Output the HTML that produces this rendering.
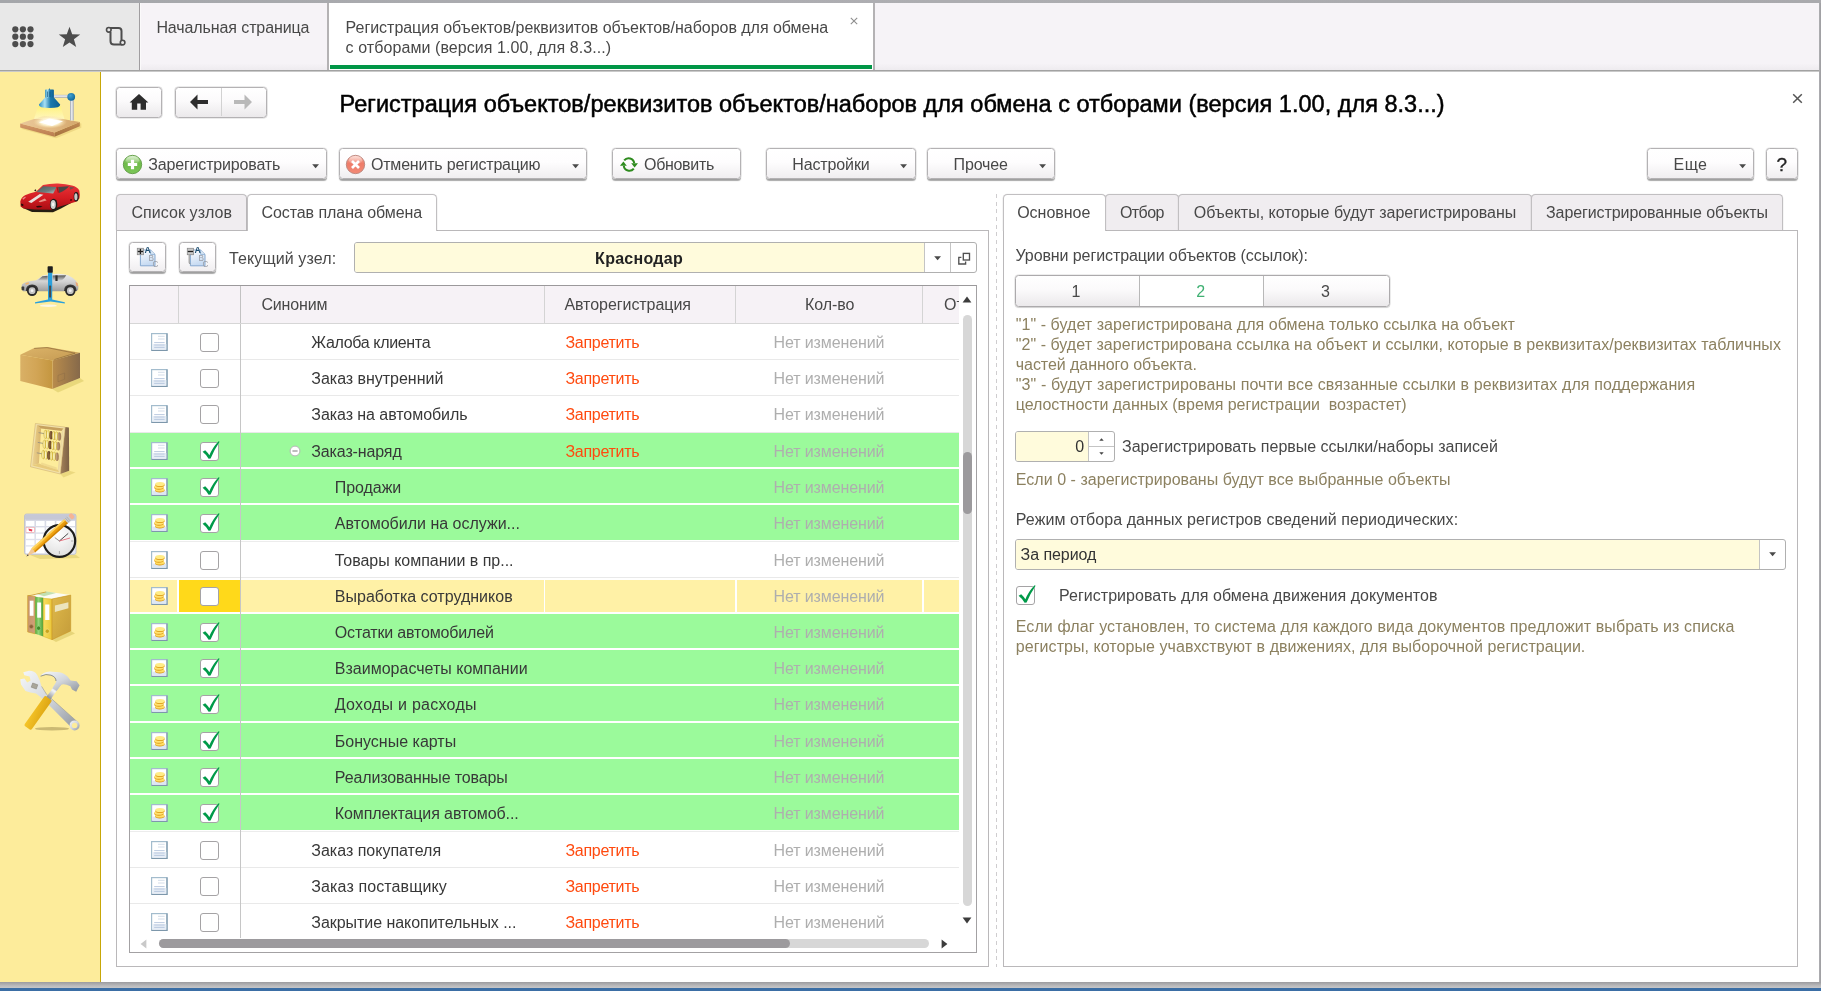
<!DOCTYPE html>
<html lang="ru"><head><meta charset="utf-8"><title>Регистрация объектов для обмена</title>
<style>
html,body{margin:0;padding:0;background:#fff;}
body{width:1821px;height:991px;overflow:hidden;font-family:"Liberation Sans",Arial,sans-serif;}
#app{will-change:transform;position:relative;width:1821px;height:991px;overflow:hidden;}
#app div,#app span.t,#app svg{position:absolute;box-sizing:border-box;}
span.t{white-space:pre;}
.btn{border:1px solid #b4b2b4;border-radius:3.5px;background:linear-gradient(#ffffff 0%,#fefdfe 45%,#f0eef0 100%);box-shadow:0 1.2px 1px rgba(0,0,0,.34),0 0 0 .5px rgba(0,0,0,.10);}
.btn.nav{box-shadow:0 0 0 .6px rgba(0,0,0,.16);background:linear-gradient(#ffffff 0%,#fbfafb 45%,#ebe9eb 100%);}
.tab{border:1px solid #c1bfc1;border-bottom:none;border-radius:4.5px 4.5px 0 0;background:#f0edf0;box-shadow:0 0 0 .5px rgba(0,0,0,.09);clip-path:inset(-1px -1px 0 -1px);}
.tab.on{background:#fff;}
.cb{border:1.5px solid #a5a3a5;border-radius:3px;background:#fff;}

</style></head>
<body>
<div id="app">
<div style="left:0px;top:0px;width:1821px;height:3px;background:linear-gradient(90deg,#a4a6aa,#aeaeb2 40%,#a9a9ad);"></div>
<div style="left:0px;top:3px;width:1821px;height:67px;background:linear-gradient(#f6f3f7 0,#f6f3f7 90%,#eeebef 100%);"></div>
<div style="left:0px;top:3px;width:139px;height:67px;background:#e8e8e8;"></div>
<div style="left:138.8px;top:3px;width:1.5px;height:67px;background:#a09ea0;"></div>
<div style="left:140px;top:3px;width:1px;height:67px;background:#fbfafb;"></div>
<div style="left:327.4px;top:3px;width:1.7px;height:67px;background:#b4b2b4;"></div>
<div style="left:329px;top:3px;width:544px;height:67px;background:#fff;"></div>
<div style="left:873.4px;top:3px;width:1.7px;height:67px;background:#b4b2b4;"></div>
<div style="left:330.2px;top:65.4px;width:541.6px;height:3.8px;background:#009646;"></div>
<div style="left:0px;top:70px;width:1821px;height:1px;background:#a2a2a2;"></div>
<div style="left:0px;top:71px;width:1821px;height:1px;background:#c9c9c9;"></div>
<span class="t" style="left:156.40px;top:18.46px;font-size:16px;line-height:20px;color:#484848;letter-spacing:-0.101px;">Начальная страница</span>
<span class="t" style="left:345.60px;top:18.46px;font-size:16px;line-height:20px;color:#484848;letter-spacing:-0.031px;">Регистрация объектов/реквизитов объектов/наборов для обмена</span>
<span class="t" style="left:345.60px;top:38.46px;font-size:16px;line-height:20px;color:#484848;letter-spacing:0.076px;">с отборами (версия 1.00, для 8.3...)</span>
<svg style="left:849px;top:16.3px" width="10" height="10" viewBox="0 0 10 10"><path d="M1.8 1.8L8.2 8.2M8.2 1.8L1.8 8.2" stroke="#8e8e8e" stroke-width="1.1" fill="none"/></svg>
<svg style="left:12px;top:26px" width="22" height="22" viewBox="0 0 22 22" fill="#4d4d4d"><rect x="0.2" y="0.2" width="6.2" height="6.2" rx="3.1"/><rect x="7.8" y="0.2" width="6.2" height="6.2" rx="3.1"/><rect x="15.4" y="0.2" width="6.2" height="6.2" rx="3.1"/><rect x="0.2" y="7.6" width="6.2" height="6.2" rx="3.1"/><rect x="7.8" y="7.6" width="6.2" height="6.2" rx="3.1"/><rect x="15.4" y="7.6" width="6.2" height="6.2" rx="3.1"/><rect x="0.2" y="15.0" width="6.2" height="6.2" rx="3.1"/><rect x="7.8" y="15.0" width="6.2" height="6.2" rx="3.1"/><rect x="15.4" y="15.0" width="6.2" height="6.2" rx="3.1"/></svg>
<svg style="left:58px;top:26px" width="23" height="22" viewBox="0 0 23 22"><path d="M11.5 0.8L14.2 8.3L22.2 8.5L15.9 13.3L18.2 21L11.5 16.5L4.8 21L7.1 13.3L0.8 8.5L8.8 8.3Z" fill="#4d4d4d"/></svg>
<svg style="left:105px;top:26px" width="22" height="21" viewBox="0 0 22 21" fill="none" stroke="#4d4d4d" stroke-width="2"><path d="M4.5 2H13.5Q16.5 2 16.5 5V14"/><path d="M5.5 6V15Q5.5 18.5 9 18.5H17"/><circle cx="3.8" cy="3.8" r="2.3" fill="#e8e8e8" stroke-width="1.6"/><circle cx="17.6" cy="16.6" r="2.3" fill="#e8e8e8" stroke-width="1.6"/></svg>
<div style="left:1819px;top:3px;width:2px;height:988px;background:linear-gradient(90deg,#b0b0b3,#9c9ca0);"></div>
<div style="left:0px;top:982px;width:1821px;height:6px;background:linear-gradient(#9b9b9f,#b9b9bb 60%,#c6c6c8);"></div>
<div style="left:0px;top:988px;width:1821px;height:3px;background:#3b6ea5;"></div>
<div style="left:0px;top:72px;width:100px;height:910px;background:#fdec9b;"></div>
<div style="left:100px;top:72px;width:1px;height:910px;background:#c7a708;"></div>
<svg style="left:0;top:72px" width="100" height="910" viewBox="0 72 100 910">
<defs>
<linearGradient id="wd1" x1="0" y1="0" x2="1" y2="0"><stop offset="0" stop-color="#e9c79a"/><stop offset="0.5" stop-color="#e3bb85"/><stop offset="1" stop-color="#d2a56a"/></linearGradient>
<linearGradient id="wd2" x1="0" y1="0" x2="0" y2="1"><stop offset="0" stop-color="#d59a6a"/><stop offset="1" stop-color="#b87c4e"/></linearGradient>
<linearGradient id="wd3" x1="0" y1="0" x2="0" y2="1"><stop offset="0" stop-color="#c08a52"/><stop offset="1" stop-color="#a5723f"/></linearGradient>
<linearGradient id="lsh" x1="0" y1="0" x2="1" y2="0"><stop offset="0" stop-color="#2a8cc0"/><stop offset="0.28" stop-color="#a8e0f4"/><stop offset="0.55" stop-color="#1a78ac"/><stop offset="1" stop-color="#0d5f92"/></linearGradient>
<linearGradient id="lcone" x1="0" y1="0" x2="0" y2="1"><stop offset="0" stop-color="#fff27a" stop-opacity="0.95"/><stop offset="1" stop-color="#fff9c4" stop-opacity="0.75"/></linearGradient>
<radialGradient id="lglow" cx="0.5" cy="0.5" r="0.5"><stop offset="0" stop-color="#fff"/><stop offset="0.55" stop-color="#fff8d8" stop-opacity="0.9"/><stop offset="1" stop-color="#f6dca0" stop-opacity="0"/></radialGradient>
<linearGradient id="pole" x1="0" y1="0" x2="1" y2="0"><stop offset="0" stop-color="#9aa0aa"/><stop offset="0.45" stop-color="#eef0f4"/><stop offset="1" stop-color="#a4a8b2"/></linearGradient>
<linearGradient id="poleh" x1="0" y1="0" x2="0" y2="1"><stop offset="0" stop-color="#b4b8c2"/><stop offset="0.45" stop-color="#f0f2f6"/><stop offset="1" stop-color="#9ca2ac"/></linearGradient>
<radialGradient id="ball" cx="0.4" cy="0.35" r="0.7"><stop offset="0" stop-color="#3fa0d0"/><stop offset="1" stop-color="#0d6498"/></radialGradient>

<linearGradient id="carR" x1="0" y1="0" x2="0" y2="1"><stop offset="0" stop-color="#e8363a"/><stop offset="0.55" stop-color="#d41c22"/><stop offset="1" stop-color="#a80e14"/></linearGradient>
<linearGradient id="glass" x1="0" y1="0" x2="1" y2="1"><stop offset="0" stop-color="#4a5a5c"/><stop offset="0.6" stop-color="#6b7c7c"/><stop offset="1" stop-color="#b8c4c4"/></linearGradient>
<radialGradient id="whl" cx="0.5" cy="0.5" r="0.5"><stop offset="0" stop-color="#f4f4f4"/><stop offset="0.6" stop-color="#c4c4c4"/><stop offset="0.72" stop-color="#3a3a3a"/><stop offset="1" stop-color="#1c1c1c"/></radialGradient>

<linearGradient id="silv" x1="0" y1="0" x2="0" y2="1"><stop offset="0" stop-color="#ececec"/><stop offset="0.45" stop-color="#d2d2d2"/><stop offset="1" stop-color="#9c9c9c"/></linearGradient>
<linearGradient id="swin" x1="0" y1="0" x2="0" y2="1"><stop offset="0" stop-color="#5a5a5a"/><stop offset="1" stop-color="#d8d8d8"/></linearGradient>

<linearGradient id="bxL" x1="0" y1="0" x2="1" y2="0"><stop offset="0" stop-color="#d9b066"/><stop offset="0.5" stop-color="#d2a556"/><stop offset="1" stop-color="#c4963f"/></linearGradient>
<linearGradient id="bxR" x1="0" y1="0" x2="1" y2="0"><stop offset="0" stop-color="#b98c4c"/><stop offset="1" stop-color="#86694a"/></linearGradient>
<linearGradient id="bxT" x1="0" y1="0" x2="1" y2="1"><stop offset="0" stop-color="#dcb469"/><stop offset="1" stop-color="#c59a52"/></linearGradient>

<linearGradient id="abF" x1="0" y1="0" x2="1" y2="0"><stop offset="0" stop-color="#ecd392"/><stop offset="1" stop-color="#d9b56c"/></linearGradient>
<linearGradient id="abS" x1="0" y1="0" x2="1" y2="0"><stop offset="0" stop-color="#a5835a"/><stop offset="1" stop-color="#7c6045"/></linearGradient>

<linearGradient id="cal" x1="0" y1="0" x2="0" y2="1"><stop offset="0" stop-color="#d4d6e2"/><stop offset="1" stop-color="#e6e8f2"/></linearGradient>
<radialGradient id="clk" cx="0.45" cy="0.3" r="0.8"><stop offset="0" stop-color="#ffffff"/><stop offset="1" stop-color="#dcdcdc"/></radialGradient>
<linearGradient id="pen" x1="0" y1="0" x2="1" y2="1"><stop offset="0" stop-color="#ffd25a"/><stop offset="0.5" stop-color="#f2a512"/><stop offset="1" stop-color="#d98c06"/></linearGradient>

<linearGradient id="fBr" x1="0" y1="0" x2="1" y2="0"><stop offset="0" stop-color="#c9966a"/><stop offset="1" stop-color="#cfa07a"/></linearGradient>
<linearGradient id="fGr" x1="0" y1="0" x2="1" y2="0"><stop offset="0" stop-color="#58a83a"/><stop offset="0.4" stop-color="#92d478"/><stop offset="1" stop-color="#4e9e32"/></linearGradient>
<linearGradient id="fYe" x1="0" y1="0" x2="1" y2="0"><stop offset="0" stop-color="#f8de5e"/><stop offset="1" stop-color="#eac63a"/></linearGradient>
<linearGradient id="fSd" x1="0" y1="0" x2="1" y2="1"><stop offset="0" stop-color="#dfb94a"/><stop offset="1" stop-color="#c49c3a"/></linearGradient>

<linearGradient id="met" x1="0" y1="0" x2="1" y2="1"><stop offset="0" stop-color="#f6f8fa"/><stop offset="0.5" stop-color="#d2d6dc"/><stop offset="1" stop-color="#8e949c"/></linearGradient>
<linearGradient id="met2" x1="0" y1="0" x2="1" y2="0"><stop offset="0" stop-color="#8a8e94"/><stop offset="0.4" stop-color="#f2f4f6"/><stop offset="1" stop-color="#7c8086"/></linearGradient>
<linearGradient id="hnd" x1="0" y1="0" x2="1" y2="1"><stop offset="0" stop-color="#f6c62a"/><stop offset="1" stop-color="#dca412"/></linearGradient>
</defs>

<!-- 1: desk lamp -->
<g>
<path d="M20.2 123.6L44.1 115.7L79.8 122L79.8 126.3L54.6 136.8L20.2 127.6Z" fill="#c9a040" opacity="0.25" transform="translate(1.5,1.5)"/>
<path d="M20.2 123.6L54.6 132.5L54.6 136.8L20.2 127.6Z" fill="url(#wd2)"/>
<path d="M54.6 132.5L79.8 122L79.8 126.3L54.6 136.8Z" fill="url(#wd3)"/>
<path d="M20.2 123.6L44.1 115.7L79.8 122L54.6 132.5Z" fill="url(#wd1)"/>
<path d="M38.2 106L60.5 106L64.5 119L34 119Z" fill="url(#lcone)"/>
<ellipse cx="50" cy="122" rx="17" ry="6.5" fill="url(#lglow)"/>
<path d="M38.9 122.3L49.3 118.4L63.1 121.3L52 125.9Z" fill="#fff"/>
<rect x="70" y="99" width="3.8" height="21.5" fill="url(#pole)"/>
<rect x="53" y="94.8" width="16" height="3" fill="url(#poleh)"/>
<circle cx="71.2" cy="96.8" r="3.9" fill="url(#ball)"/>
<path d="M49.4 88L50.2 90H48.6Z" fill="#1a6a9c"/>
<rect x="45.1" y="89.6" width="8.8" height="8.6" rx="0.8" fill="url(#lsh)"/>
<path d="M47.6 91.5V97M49.9 91.5V97" stroke="#0b4a74" stroke-width="1" opacity="0.7"/>
<path d="M45.1 97.4Q42.4 100.6 38.9 104.4Q38.4 107.9 49.6 107.9Q60.6 107.9 60.2 104.4Q56.8 100.6 53.9 97.4Z" fill="url(#lsh)"/>
</g>

<!-- 2: red car -->
<g>
<path d="M22 207.6L32 212L53 212.2L61 208.4L72 202.6L52 205Z" fill="#120c06" opacity="0.92"/>
<path d="M20.6 206.5L20.3 201.5Q21 197.5 25 195.2Q30 193 36 191.8L43 185Q50 183.2 58 183.4Q66 183.8 72 185.6Q77.5 187 79.3 190.4Q80.2 194.5 79.4 198.6L76 201.8L60 206.4L51.5 209.8L35 209.6L23.5 208.4Z" fill="url(#carR)"/>
<path d="M36.4 192L43.2 186.3L56.6 186.9L53.2 193.4Z" fill="url(#glass)"/>
<path d="M58.2 187L69 186.3Q66.4 190 59 193Z" fill="#4a4646"/>
<path d="M69.6 186.8L74.5 187.6Q72.5 189.2 70 189.8Z" fill="#7a4a4a"/>
<path d="M57 186.8L58.4 192.6" stroke="#a31217" stroke-width="1.2"/>
<path d="M39.8 193.9L43.4 194.7L31.4 202.9L28.2 201.7Z" fill="#e9e1dd"/>
<path d="M38.6 201.2L44.8 198.6L46.6 200.6L40 202.2Z" fill="#f0b0a0" opacity="0.8"/>
<path d="M22.4 198.6L25.2 196.4L25.8 197.6L23.2 199.8Z" fill="#f0b8b0" opacity="0.7"/>
<path d="M36 206.2Q39 205.4 42.5 206.2Q41 207.6 37 207.4Z" fill="#2a0a0a"/>
<path d="M21 203.4L23.4 204.2L23.2 206.2L21.2 205.4Z" fill="#2a0a0a"/>
<ellipse cx="53.6" cy="204.4" rx="3.7" ry="5.7" fill="#1e1a1a"/>
<ellipse cx="53.2" cy="204.4" rx="2.6" ry="4.5" fill="#cfcfcf"/>
<ellipse cx="53.1" cy="204.4" rx="1.1" ry="1.9" fill="#f6f6f6"/>
<ellipse cx="76.2" cy="196.7" rx="2.5" ry="4.7" fill="#1e1a1a"/>
<ellipse cx="75.9" cy="196.7" rx="1.6" ry="3.5" fill="#c9c9c9"/>
<path d="M34.2 190.2L35.6 189.2L36.4 190.4L35.2 191.6Z" fill="#2a1a1a"/>
<path d="M70 199.6L72 199.2L72 200.4L70.2 200.8Z" fill="#3a0a0a"/>
</g>

<!-- 3: car on lift -->
<g>
<ellipse cx="48.4" cy="305.7" rx="8.5" ry="1.3" fill="#fbf7e6"/>
<path d="M48 272.6H52.2V299.5L64.8 302.2V303.6L50.6 301.6L35 303.6V302.2L48 299.5Z" fill="#2aa0dc"/>
<path d="M21.6 288.4L21.9 284.4Q24 282.2 28 281.4L36.2 280.2L42.6 275.4Q50 273.8 58 273.8Q64 274 68.2 275.2Q73 277.6 75.6 280.4Q78.2 282.4 78.4 286L78.2 289.6L76.6 291.2H23Z" fill="url(#silv)"/>
<path d="M37.4 280.4L42.4 276.2L47.6 275.8V281Z" fill="url(#swin)"/>
<path d="M52.6 275.5L66.2 275.3Q64.6 278.6 61.4 280.8L52.6 281Z" fill="url(#swin)"/>
<rect x="55.4" y="275.4" width="2.2" height="5.6" fill="#2c2c2c"/>
<path d="M25.4 283L29 282.2L28.6 284L25.8 284.8Z" fill="#f4b46a"/>
<path d="M75.4 281.6L77.6 283.4L78 286.4L76.4 285.6Z" fill="#f2a66a"/>
<rect x="21.6" y="286.6" width="2.6" height="3.6" rx="0.6" fill="#3c3c3c"/>
<rect x="48" y="272.6" width="4.2" height="19" fill="#2aa0dc"/>
<rect x="47.6" y="266.2" width="5.2" height="6.6" rx="0.8" fill="#1e1e1e"/>
<rect x="49.1" y="285.6" width="2" height="12" rx="0.6" fill="#4a4a4a"/>
<path d="M25.8 291Q25.8 284.4 32.1 284.4Q38.4 284.4 38.4 291Z" fill="#3a3a3a"/><circle cx="32.1" cy="290.7" r="5.2" fill="#2a2a2a"/><circle cx="32.1" cy="290.7" r="3.4" fill="#c4c4c4"/><circle cx="32.1" cy="290.7" r="1.4" fill="#f2f2f2"/>
<path d="M64 291Q64 284.4 70.3 284.4Q76.6 284.4 76.6 291Z" fill="#3a3a3a"/><circle cx="70.3" cy="290.7" r="5.2" fill="#2a2a2a"/><circle cx="70.3" cy="290.7" r="3.4" fill="#c4c4c4"/><circle cx="70.3" cy="290.7" r="1.4" fill="#f2f2f2"/>
</g>

<!-- 4: box -->
<g>
<path d="M52.4 388.9L80 378L84 381L58 392.5Z" fill="#d9c860" opacity="0.55"/>
<path d="M20.3 354.7L34.2 348L47.6 347.1L80 352.8L52.4 360.4Z" fill="url(#bxT)"/>
<path d="M20.3 354.7L52.4 360.4V388.9L20.3 381Z" fill="url(#bxL)"/>
<path d="M52.4 360.4L80 352.8V378L52.4 388.9Z" fill="url(#bxR)"/>
<path d="M34.2 348.4L47 347.6L75 353.2L54.4 359.6" fill="none" stroke="#8c6a3a" stroke-width="0.9" opacity="0.75"/>
<path d="M52.4 360.4V388.9" stroke="#d9b46a" stroke-width="0.7" opacity="0.8"/>
<path d="M58 375.4L64.6 373V379.2L58 381.8Z" fill="none" stroke="#8a6a46" stroke-width="0.6" opacity="0.7"/>
</g>

<!-- 5: abacus -->
<g>
<path d="M60.3 474L69.2 470.7L75.5 472.4L63.5 477.6Z" fill="#dcc868" opacity="0.55"/>
<path d="M65.2 427.1L68.9 427.5L69.2 470.7L60.3 474Z" fill="url(#abS)"/>
<path d="M35.4 423.5L65.2 427.1L60.3 474L30.5 466.8Z" fill="#f1e0ac" stroke="#c9a868" stroke-width="0.5"/>
<path d="M36.9 425.2L63.6 428.4L59.2 472.2L32.2 465.6Z" fill="#fdec9b"/>
<path d="M36.9 425.2L41.1 428.5L38.9 463.4L32.2 465.6Z" fill="url(#abF)"/>
<path d="M36.9 425.2L63.6 428.4L61.6 431L41.1 428.5Z" fill="#c6a05e"/>
<path d="M63.6 428.4L59.2 472.2L57.7 469.8L61.6 431Z" fill="#ecd9a2"/>
<path d="M38.9 463.4L57.7 469.8L59.2 472.2L32.2 465.6Z" fill="#e7ca7c"/>
<path d="M40.5 464.4L56.6 469.8L56.9 467.6L41.6 462.6Z" fill="#efd98e" opacity="0.9"/>
<g stroke="#8f8b80" stroke-width="0.8"><path d="M38.6 432.6L45 433.8"/><path d="M37.8 442.4L44 443.6"/><path d="M36.8 452.8L43 454"/></g>
<ellipse cx="45.6" cy="434.4" rx="1.75" ry="4.3" fill="#e4c94a" stroke="#b4962e" stroke-width="0.35"/><ellipse cx="45.1" cy="434.4" rx="0.7" ry="3.9" fill="#f8f1c4" opacity="0.9"/><ellipse cx="48.4" cy="434.8" rx="1.75" ry="4.3" fill="#ecd662" stroke="#b4962e" stroke-width="0.35"/><ellipse cx="47.8" cy="434.8" rx="0.7" ry="3.9" fill="#fbf6d2" opacity="0.9"/><ellipse cx="51.1" cy="435.2" rx="1.75" ry="4.3" fill="#6f4a2c"/><ellipse cx="50.6" cy="435.2" rx="0.7" ry="3.9" fill="#8a6240" opacity="0.9"/><ellipse cx="53.9" cy="435.7" rx="1.75" ry="4.3" fill="#e4c94a" stroke="#b4962e" stroke-width="0.35"/><ellipse cx="53.3" cy="435.7" rx="0.7" ry="3.9" fill="#f8f1c4" opacity="0.9"/><ellipse cx="56.6" cy="436.1" rx="1.75" ry="4.3" fill="#ecd662" stroke="#b4962e" stroke-width="0.35"/><ellipse cx="56.1" cy="436.1" rx="0.7" ry="3.9" fill="#fbf6d2" opacity="0.9"/><ellipse cx="59.4" cy="436.5" rx="1.75" ry="4.3" fill="#a5805a"/><ellipse cx="58.8" cy="436.5" rx="0.7" ry="3.9" fill="#c4a078" opacity="0.9"/><ellipse cx="44.6" cy="444.2" rx="1.75" ry="4.3" fill="#e4c94a" stroke="#b4962e" stroke-width="0.35"/><ellipse cx="44.1" cy="444.2" rx="0.7" ry="3.9" fill="#f8f1c4" opacity="0.9"/><ellipse cx="47.4" cy="444.6" rx="1.75" ry="4.3" fill="#ecd662" stroke="#b4962e" stroke-width="0.35"/><ellipse cx="46.8" cy="444.6" rx="0.7" ry="3.9" fill="#fbf6d2" opacity="0.9"/><ellipse cx="50.1" cy="445.0" rx="1.75" ry="4.3" fill="#6f4a2c"/><ellipse cx="49.6" cy="445.0" rx="0.7" ry="3.9" fill="#8a6240" opacity="0.9"/><ellipse cx="52.9" cy="445.5" rx="1.75" ry="4.3" fill="#e4c94a" stroke="#b4962e" stroke-width="0.35"/><ellipse cx="52.3" cy="445.5" rx="0.7" ry="3.9" fill="#f8f1c4" opacity="0.9"/><ellipse cx="55.6" cy="445.9" rx="1.75" ry="4.3" fill="#ecd662" stroke="#b4962e" stroke-width="0.35"/><ellipse cx="55.1" cy="445.9" rx="0.7" ry="3.9" fill="#fbf6d2" opacity="0.9"/><ellipse cx="58.4" cy="446.3" rx="1.75" ry="4.3" fill="#a5805a"/><ellipse cx="57.8" cy="446.3" rx="0.7" ry="3.9" fill="#c4a078" opacity="0.9"/><ellipse cx="43.4" cy="454.6" rx="1.75" ry="4.3" fill="#e4c94a" stroke="#b4962e" stroke-width="0.35"/><ellipse cx="42.9" cy="454.6" rx="0.7" ry="3.9" fill="#f8f1c4" opacity="0.9"/><ellipse cx="46.1" cy="455.0" rx="1.75" ry="4.3" fill="#ecd662" stroke="#b4962e" stroke-width="0.35"/><ellipse cx="45.6" cy="455.0" rx="0.7" ry="3.9" fill="#fbf6d2" opacity="0.9"/><ellipse cx="48.9" cy="455.4" rx="1.75" ry="4.3" fill="#6f4a2c"/><ellipse cx="48.4" cy="455.4" rx="0.7" ry="3.9" fill="#8a6240" opacity="0.9"/><ellipse cx="51.6" cy="455.9" rx="1.75" ry="4.3" fill="#e4c94a" stroke="#b4962e" stroke-width="0.35"/><ellipse cx="51.1" cy="455.9" rx="0.7" ry="3.9" fill="#f8f1c4" opacity="0.9"/><ellipse cx="54.4" cy="456.3" rx="1.75" ry="4.3" fill="#ecd662" stroke="#b4962e" stroke-width="0.35"/><ellipse cx="53.9" cy="456.3" rx="0.7" ry="3.9" fill="#fbf6d2" opacity="0.9"/><ellipse cx="57.1" cy="456.7" rx="1.75" ry="4.3" fill="#a5805a"/><ellipse cx="56.6" cy="456.7" rx="0.7" ry="3.9" fill="#c4a078" opacity="0.9"/>
</g>

<!-- 6: calendar + clock + pencil -->
<g>
<path d="M30 555L76 555L80 558L40 559Z" fill="#d6c464" opacity="0.5"/>
<rect x="24.5" y="514" width="51.5" height="40.4" rx="2" fill="url(#cal)" stroke="#b9bccb" stroke-width="0.8"/>
<rect x="25" y="514.6" width="50.5" height="5.2" rx="1.4" fill="#c6c8d6"/>
<g fill="#fff">
<rect x="26" y="521" width="8.4" height="5"/><rect x="36" y="521" width="8.6" height="5"/><rect x="46.2" y="521" width="8.6" height="5"/><rect x="56.4" y="521" width="8.6" height="5"/><rect x="66.6" y="521" width="8.4" height="5"/>
<rect x="26" y="527.4" width="8.4" height="5" stroke="#f0a8a8" stroke-width="0.6"/><rect x="36" y="527.4" width="8.6" height="5"/><rect x="46.2" y="527.4" width="8.6" height="5"/><rect x="66.6" y="527.4" width="8.4" height="5"/>
<rect x="26" y="533.8" width="8.4" height="5"/><rect x="36" y="533.8" width="8.6" height="5"/>
<rect x="26" y="540.2" width="8.4" height="5"/><rect x="36" y="540.2" width="8.6" height="5"/>
<rect x="26" y="546.6" width="8.4" height="6.4"/><rect x="36" y="546.6" width="8.6" height="6.4"/>
</g>
<path d="M28.4 528.6L32.4 529.6L32 531.6L29 530.8Z" fill="#ec3a52"/>
<circle cx="59.4" cy="541" r="15.8" fill="url(#clk)" stroke="#1c1c1c" stroke-width="2.2"/>
<path d="M59.4 551V554M71 541H73.4" stroke="#9a9a9a" stroke-width="0.7"/>
<path d="M59.4 541L54.8 537.6" stroke="#8a8a8a" stroke-width="0.9"/>
<path d="M59.4 541L68.2 533.4" stroke="#3a3a3a" stroke-width="0.9"/>
<path d="M59.4 541L70 538" stroke="#e25a6a" stroke-width="0.8"/>
<g transform="translate(26.4,556.5) rotate(-41.7)">
<path d="M0 0L9.6 -2.7V2.7Z" fill="#f2c896"/>
<path d="M0 0L2.6 -0.75V0.75Z" fill="#3a3a3a"/>
<rect x="9.4" y="-2.7" width="44" height="5.4" fill="url(#pen)"/>
<rect x="9.4" y="-2.7" width="44" height="1.6" fill="#ffd868" opacity="0.85"/>
<rect x="9.4" y="1.3" width="44" height="1.4" fill="#c97e04" opacity="0.8"/>
<rect x="53.2" y="-2.9" width="5.4" height="5.8" fill="#c9cbcf"/>
<path d="M54.6 -2.9V2.9M56.4 -2.9V2.9" stroke="#a2a4a8" stroke-width="0.6"/>
<rect x="58.4" y="-2.8" width="4.2" height="5.6" rx="1.6" fill="#f6b494"/>
</g>
</g>

<!-- 7: binders -->
<g>
<path d="M52 639.7L70.7 630.9L75 633.4L56 642Z" fill="#d8c662" opacity="0.6"/>
<path d="M27.7 595.5L46 591.5L70.7 595.1L52 599Z" fill="#fbfbf2"/>
<path d="M36 593.7L46.6 591.6L56 593L44 596.2Z" fill="#9ccf86" opacity="0.6"/>
<path d="M27.7 595.5L46 591.5L46.6 592.2L29 596.2Z" fill="#d6a83a"/>
<path d="M27.7 595.5L35.2 596.4V633.8L27.7 631.9Z" fill="url(#fBr)" stroke="#cf9d2c" stroke-width="0.7"/>
<path d="M35.2 596.8L43.4 597.8V636.4L35.2 633.8Z" fill="url(#fGr)"/>
<path d="M43.4 598.5L52 599V639.7L43.4 636.4Z" fill="url(#fYe)" stroke="#d9ae2a" stroke-width="0.5"/>
<path d="M52 599L70.7 595.1V630.9L52 639.7Z" fill="url(#fSd)" stroke="#c79624" stroke-width="0.6"/>
<rect x="29.7" y="600.7" width="3.8" height="15.1" fill="#fff"/>
<rect x="37.2" y="602.5" width="3.9" height="15.2" fill="#fff"/>
<rect x="45.2" y="604.5" width="4.2" height="15.5" fill="#fff"/>
<path d="M54.9 605.6L68.4 602.3V608.2L54.9 611.9Z" fill="#ece4bc"/>
<circle cx="31.3" cy="626.6" r="2" fill="#8c6238" stroke="#b89068" stroke-width="0.6"/>
<circle cx="38.6" cy="628.2" r="2.1" fill="#3f8c2a" stroke="#9ad084" stroke-width="0.6"/>
<circle cx="47.3" cy="631.2" r="2.2" fill="#c9a41e" stroke="#f6e68c" stroke-width="0.6"/>
</g>

<!-- 8: tools -->
<g>
<ellipse cx="52" cy="728.8" rx="17" ry="1.7" fill="#b9a866" opacity="0.75"/>
<!-- wrench -->
<path d="M23.3 672.3L29 670.8Q34.5 670.6 37.2 675Q40 680 41.6 686.4L46.6 694.4L78 722.4L72.4 728.6L42.4 698.6L36 693.4Q30 692.6 25.5 691L21 684.5L20.2 679.2L24.5 678.4L27.2 682.4L30.6 680.4L29.6 676.6L24.3 675.2Z" fill="url(#met)"/>
<path d="M41.6 686.4L46.6 694.4L78 722.4" fill="none" stroke="#8c9098" stroke-width="0.8" opacity="0.7"/>
<circle cx="74.6" cy="725.4" r="5" fill="url(#met)"/>
<circle cx="74.6" cy="725.4" r="2.7" fill="#fdec9b"/>
<rect x="31.8" y="683.8" width="5.4" height="4.4" transform="rotate(20 34.5 686)" fill="#a9a69a" stroke="#85837b" stroke-width="0.5"/>
<!-- hammer -->
<g transform="translate(28.6,726.2) rotate(-54.6)">
<rect x="-2" y="-4.4" width="36.6" height="8.8" rx="1.6" fill="url(#hnd)"/>
<rect x="34.4" y="-2.4" width="22" height="4.8" fill="url(#met2)"/>
</g>
<path d="M55.2 672.1Q62 671.6 67.6 676.4L70.6 680.4L76.6 681.2L79.6 685.2L76.2 691.8L72 689.4L70.4 686.2Q64 683.4 61.2 684.8L56.6 691L52.4 688.2L56.2 682Q56.4 676.8 49.6 674.8Q44.4 674 40.2 676.6Q42.6 671.8 49.8 671.4Z" fill="url(#met)"/>
<path d="M40.6 676.2Q46 673.4 51 675.2Q56 677 56 681" fill="none" stroke="#6a6e74" stroke-width="0.9" opacity="0.8"/>
</g>
</svg>

<div class="btn nav" style="left:116.3px;top:87px;width:46.2px;height:30.8px"></div>
<svg style="left:129.4px;top:93px" width="20" height="18" viewBox="0 0 20 18"><path d="M10 1L0.6 9.6H2.8V16.8H8.2V10.6H11.6V16.8H17V9.6H19.4Z" fill="#2d2d2d"/></svg>
<div class="btn nav" style="left:175.1px;top:87px;width:92.2px;height:30.8px"></div>
<div style="left:221px;top:88px;width:1px;height:28px;background:#d2d2d2;"></div>
<svg style="left:189px;top:94px" width="20" height="16" viewBox="0 0 20 16"><path d="M8.5 0.5L1 8L8.5 15.5V10H19V6H8.5Z" fill="#2d2d2d"/></svg>
<svg style="left:233px;top:94px" width="20" height="16" viewBox="0 0 20 16"><path d="M11.5 0.5L19 8L11.5 15.5V10H1V6H11.5Z" fill="#b9b9b9"/></svg>
<span class="t" style="left:339.60px;top:90.36px;font-size:23.5px;line-height:29px;color:#000;letter-spacing:0.012px;-webkit-text-stroke:0.5px #000;">Регистрация объектов/реквизитов объектов/наборов для обмена с отборами (версия 1.00, для 8.3...)</span>
<svg style="left:1792px;top:93px" width="11" height="11" viewBox="0 0 11 11"><path d="M1.2 1.2L9.8 9.8M9.8 1.2L1.2 9.8" stroke="#555" stroke-width="1.5" fill="none"/></svg>
<div class="btn" style="left:116.3px;top:148.3px;width:211px;height:31px"></div>
<svg style="left:122px;top:154px" width="21" height="21" viewBox="0 0 21 21"><defs><linearGradient id="gp" x1="0" y1="0" x2="0" y2="1"><stop offset="0" stop-color="#b5e09c"/><stop offset="0.45" stop-color="#6fbb4a"/><stop offset="1" stop-color="#7cc658"/></linearGradient><linearGradient id="gl" x1="0" y1="0" x2="0" y2="1"><stop offset="0" stop-color="#fff" stop-opacity="0.55"/><stop offset="1" stop-color="#fff" stop-opacity="0.05"/></linearGradient></defs><circle cx="10.5" cy="10.5" r="9.2" fill="url(#gp)" stroke="#5f9a44" stroke-width="0.9"/><ellipse cx="10.5" cy="6.2" rx="6.6" ry="4.2" fill="url(#gl)"/><path d="M10.5 5.8V15.2M5.8 10.5H15.2" stroke="#fff" stroke-width="3.2"/></svg>
<span class="t" style="left:148.30px;top:154.76px;font-size:16px;line-height:20px;color:#484848;letter-spacing:-0.177px;">Зарегистрировать</span>
<svg style="left:311.7px;top:164.2px" width="7.2" height="4.5" viewBox="0 0 8 5"><path d="M0.2 0.2H7.8L4 4.8Z" fill="#4a4a4a"/></svg>
<div class="btn" style="left:339px;top:148.3px;width:248.2px;height:31px"></div>
<svg style="left:344.5px;top:154px" width="21" height="21" viewBox="0 0 21 21"><defs><linearGradient id="gr" x1="0" y1="0" x2="0" y2="1"><stop offset="0" stop-color="#f9b9ab"/><stop offset="0.45" stop-color="#ee7c69"/><stop offset="1" stop-color="#f38a76"/></linearGradient></defs><circle cx="10.5" cy="10.5" r="9.2" fill="url(#gr)" stroke="#b9867e" stroke-width="0.9"/><ellipse cx="10.5" cy="6.2" rx="6.6" ry="4.2" fill="url(#gl)"/><path d="M7 7L14 14M14 7L7 14" stroke="#fff" stroke-width="2.7"/></svg>
<span class="t" style="left:371.00px;top:154.76px;font-size:16px;line-height:20px;color:#484848;letter-spacing:-0.203px;">Отменить регистрацию</span>
<svg style="left:571.6999999999999px;top:164.2px" width="7.2" height="4.5" viewBox="0 0 8 5"><path d="M0.2 0.2H7.8L4 4.8Z" fill="#4a4a4a"/></svg>
<div class="btn" style="left:612.2px;top:148.3px;width:129px;height:31px"></div>
<svg style="left:619px;top:155px" width="20" height="19" viewBox="0 0 20 19" fill="none"><path d="M15.2 8.2A5.6 5.6 0 0 0 5.2 5.4" stroke="#2e8b1e" stroke-width="2"/><path d="M4.8 10.8A5.6 5.6 0 0 0 14.8 13.6" stroke="#2e8b1e" stroke-width="2"/><path d="M12.2 8.3H19L15.6 12.6Z" fill="#2e8b1e"/><path d="M1 10.7H7.8L4.4 6.4Z" fill="#2e8b1e"/></svg>
<span class="t" style="left:644.00px;top:154.76px;font-size:16px;line-height:20px;color:#484848;letter-spacing:-0.307px;">Обновить</span>
<div class="btn" style="left:766px;top:148.3px;width:150px;height:31px"></div>
<span class="t" style="left:792.20px;top:154.76px;font-size:16px;line-height:20px;color:#484848;letter-spacing:-0.117px;">Настройки</span>
<svg style="left:900.1px;top:164.2px" width="7.2" height="4.5" viewBox="0 0 8 5"><path d="M0.2 0.2H7.8L4 4.8Z" fill="#4a4a4a"/></svg>
<div class="btn" style="left:927px;top:148.3px;width:127.6px;height:31px"></div>
<span class="t" style="left:953.60px;top:154.76px;font-size:16px;line-height:20px;color:#484848;letter-spacing:-0.163px;">Прочее</span>
<svg style="left:1039.0px;top:164.2px" width="7.2" height="4.5" viewBox="0 0 8 5"><path d="M0.2 0.2H7.8L4 4.8Z" fill="#4a4a4a"/></svg>
<div class="btn" style="left:1647.4px;top:148.3px;width:106.6px;height:31px"></div>
<span class="t" style="left:1673.50px;top:154.76px;font-size:16px;line-height:20px;color:#484848;letter-spacing:0.479px;">Еще</span>
<svg style="left:1738.9px;top:164.2px" width="7.2" height="4.5" viewBox="0 0 8 5"><path d="M0.2 0.2H7.8L4 4.8Z" fill="#4a4a4a"/></svg>
<div class="btn" style="left:1766px;top:148.3px;width:31.6px;height:31px"></div>
<span class="t" style="left:1776.60px;top:152.92px;font-size:19px;line-height:24px;color:#222;-webkit-text-stroke:0.3px #222;">?</span>
<div style="left:116.2px;top:230px;width:873.3px;height:737px;border:1px solid #bab8ba;background:#fff;"></div>
<div class="tab" style="left:116.2px;top:194.4px;width:131px;height:35.6px"></div>
<div class="tab on" style="left:246.7px;top:194.4px;width:190.2px;height:36.6px"></div>
<span class="t" style="left:131.50px;top:203.46px;font-size:16px;line-height:20px;color:#484848;letter-spacing:0.062px;">Список узлов</span>
<span class="t" style="left:261.40px;top:203.46px;font-size:16px;line-height:20px;color:#484848;letter-spacing:-0.057px;">Состав плана обмена</span>
<div class="btn" style="left:129px;top:242px;width:37px;height:30px"></div>
<div class="btn" style="left:179px;top:242px;width:37px;height:30px"></div>
<svg style="left:136px;top:246px" width="23" height="22" viewBox="0 0 23 22"><defs><linearGradient id="pg1" x1="0" y1="0" x2="0.3" y2="1"><stop offset="0" stop-color="#fff"/><stop offset="1" stop-color="#c6daf2"/></linearGradient></defs><path d="M4.4 4H14.6L19 8.4V19.8H4.4Z" fill="url(#pg1)" stroke="#86a9d0" stroke-width="1"/><path d="M14.6 4V8.4H19" fill="#dbe8f6" stroke="#86a9d0" stroke-width="0.8"/><rect x="1.3" y="2.3" width="6.2" height="6.4" fill="#c9c9c9" stroke="#8a8a8a" stroke-width="0.8"/><path d="M1.8 5.5H7" stroke="#1e1e1e" stroke-width="1.3"/><path d="M4.4 2.9V8.1" stroke="#1e1e1e" stroke-width="1.3"/><text x="8.4" y="7.1" font-family="Liberation Sans,sans-serif" font-size="8.8" font-weight="700" fill="#1f4f70">A</text><text x="12.6" y="14.8" font-family="Liberation Sans,sans-serif" font-size="8.2" fill="#9a9ea6">B</text><text x="16.4" y="20.7" font-family="Liberation Sans,sans-serif" font-size="8.2" fill="#9a9ea6">C</text></svg>
<svg style="left:186px;top:246px" width="23" height="22" viewBox="0 0 23 22"><defs><linearGradient id="pg0" x1="0" y1="0" x2="0.3" y2="1"><stop offset="0" stop-color="#fff"/><stop offset="1" stop-color="#c6daf2"/></linearGradient></defs><path d="M4.4 4H14.6L19 8.4V19.8H4.4Z" fill="url(#pg0)" stroke="#86a9d0" stroke-width="1"/><path d="M14.6 4V8.4H19" fill="#dbe8f6" stroke="#86a9d0" stroke-width="0.8"/><path d="M3.2 9V16.4Q3.2 17.6 4.4 17.6" fill="none" stroke="#9a9a9a" stroke-width="1.2"/><rect x="1.3" y="2.3" width="6.2" height="6.4" fill="#c9c9c9" stroke="#8a8a8a" stroke-width="0.8"/><path d="M1.8 5.5H7" stroke="#1e1e1e" stroke-width="1.3"/><text x="8.4" y="7.1" font-family="Liberation Sans,sans-serif" font-size="8.8" font-weight="700" fill="#1f4f70">A</text><text x="12.6" y="14.8" font-family="Liberation Sans,sans-serif" font-size="8.2" fill="#9a9ea6">B</text><text x="16.4" y="20.7" font-family="Liberation Sans,sans-serif" font-size="8.2" fill="#9a9ea6">C</text></svg>
<span class="t" style="left:229.00px;top:248.96px;font-size:16px;line-height:20px;color:#484848;letter-spacing:0.112px;">Текущий узел:</span>
<div style="left:354px;top:242px;width:623px;height:31px;border:1px solid #b0b0b0;border-radius:3px;background:#fff;"></div>
<div style="left:355px;top:243px;width:569px;height:29px;background:#fffbdc;border-radius:2px 0 0 2px;"></div>
<div style="left:924px;top:243px;width:1px;height:29px;background:#c4c4c4;"></div>
<div style="left:950px;top:243px;width:1px;height:29px;background:#c4c4c4;"></div>
<span class="t" style="left:595.10px;top:248.96px;font-size:16px;line-height:20px;color:#222;font-weight:700;letter-spacing:0.279px;">Краснодар</span>
<svg style="left:933.6999999999999px;top:256.2px" width="7.2" height="4.5" viewBox="0 0 8 5"><path d="M0.2 0.2H7.8L4 4.8Z" fill="#4a4a4a"/></svg>
<svg style="left:957px;top:251px" width="14" height="14" viewBox="0 0 14 14" fill="none" stroke="#505050" stroke-width="1.35"><path d="M4.4 6.3H1.8V13H8.6V10.6"/><rect x="6.3" y="2.4" width="6.2" height="6.6" fill="#fff"/></svg>
<div style="left:129px;top:285px;width:848px;height:668px;border:1px solid #a3a1a3;border-top-color:#9b999b;background:#fff;"></div>
<div style="left:130px;top:286px;width:829px;height:38px;background:#f6f2f6;"></div>
<div style="left:130px;top:323px;width:829px;height:1px;background:#d6d6d6;"></div>
<div style="left:178px;top:286px;width:1px;height:37px;background:#d4d4d4;"></div>
<div style="left:240px;top:286px;width:1px;height:37px;background:#c2c2c2;"></div>
<div style="left:544px;top:286px;width:1px;height:37px;background:#d4d4d4;"></div>
<div style="left:735px;top:286px;width:1px;height:37px;background:#d4d4d4;"></div>
<div style="left:922px;top:286px;width:1px;height:37px;background:#d4d4d4;"></div>
<span class="t" style="left:261.40px;top:294.96px;font-size:16px;line-height:20px;color:#484848;letter-spacing:-0.143px;">Синоним</span>
<span class="t" style="left:564.40px;top:294.96px;font-size:16px;line-height:20px;color:#484848;letter-spacing:-0.055px;">Авторегистрация</span>
<span class="t" style="left:805.00px;top:294.96px;font-size:16px;line-height:20px;color:#484848;letter-spacing:-0.058px;">Кол-во</span>
<div style="left:944px;top:290px;width:15px;height:30px;overflow:hidden"><span class="t" style="left:0;top:4.5px;font-size:16px;line-height:20px;color:#484848">От</span></div>
<div style="left:130px;top:359px;width:829px;height:1px;background:#e9e9e9;"></div>
<svg style="left:151px;top:333px" width="17" height="18" viewBox="0 0 17 18"><rect x="0.6" y="0.6" width="15.4" height="16.8" fill="#fff" stroke="#a3bccd" stroke-width="1.2"/><path d="M16 0.6V17.4H0.6" fill="none" stroke="#7d97ab" stroke-width="1.2"/><rect x="1.3" y="11" width="14" height="5.8" fill="#e6edf6"/><path d="M7 3.3H13.6M7 6H13.6" stroke="#cfd9e6" stroke-width="0.9"/><path d="M3.2 9.6H13.6M3.2 12H13.6M3.2 14.4H13.6" stroke="#b4c4dc" stroke-width="0.9"/></svg>
<div class="cb" style="left:200px;top:333.3px;width:18.6px;height:18.6px"></div>
<span class="t" style="left:311.30px;top:333.46px;font-size:16px;line-height:20px;color:#383838;letter-spacing:-0.339px;">Жалоба клиента</span>
<span class="t" style="left:565.50px;top:333.46px;font-size:16px;line-height:20px;color:#ff4a0f;letter-spacing:-0.302px;">Запретить</span>
<span class="t" style="left:773.50px;top:333.46px;font-size:16px;line-height:20px;color:#aeaeae;letter-spacing:-0.116px;">Нет изменений</span>
<div style="left:130px;top:395px;width:829px;height:1px;background:#e9e9e9;"></div>
<svg style="left:151px;top:369px" width="17" height="18" viewBox="0 0 17 18"><rect x="0.6" y="0.6" width="15.4" height="16.8" fill="#fff" stroke="#a3bccd" stroke-width="1.2"/><path d="M16 0.6V17.4H0.6" fill="none" stroke="#7d97ab" stroke-width="1.2"/><rect x="1.3" y="11" width="14" height="5.8" fill="#e6edf6"/><path d="M7 3.3H13.6M7 6H13.6" stroke="#cfd9e6" stroke-width="0.9"/><path d="M3.2 9.6H13.6M3.2 12H13.6M3.2 14.4H13.6" stroke="#b4c4dc" stroke-width="0.9"/></svg>
<div class="cb" style="left:200px;top:369.3px;width:18.6px;height:18.6px"></div>
<span class="t" style="left:311.30px;top:369.46px;font-size:16px;line-height:20px;color:#383838;letter-spacing:-0.026px;">Заказ внутренний</span>
<span class="t" style="left:565.50px;top:369.46px;font-size:16px;line-height:20px;color:#ff4a0f;letter-spacing:-0.302px;">Запретить</span>
<span class="t" style="left:773.50px;top:369.46px;font-size:16px;line-height:20px;color:#aeaeae;letter-spacing:-0.116px;">Нет изменений</span>
<div style="left:130px;top:432px;width:829px;height:1px;background:#e9e9e9;"></div>
<svg style="left:151px;top:405px" width="17" height="18" viewBox="0 0 17 18"><rect x="0.6" y="0.6" width="15.4" height="16.8" fill="#fff" stroke="#a3bccd" stroke-width="1.2"/><path d="M16 0.6V17.4H0.6" fill="none" stroke="#7d97ab" stroke-width="1.2"/><rect x="1.3" y="11" width="14" height="5.8" fill="#e6edf6"/><path d="M7 3.3H13.6M7 6H13.6" stroke="#cfd9e6" stroke-width="0.9"/><path d="M3.2 9.6H13.6M3.2 12H13.6M3.2 14.4H13.6" stroke="#b4c4dc" stroke-width="0.9"/></svg>
<div class="cb" style="left:200px;top:405.3px;width:18.6px;height:18.6px"></div>
<span class="t" style="left:311.30px;top:405.46px;font-size:16px;line-height:20px;color:#383838;letter-spacing:-0.061px;">Заказ на автомобиль</span>
<span class="t" style="left:565.50px;top:405.46px;font-size:16px;line-height:20px;color:#ff4a0f;letter-spacing:-0.302px;">Запретить</span>
<span class="t" style="left:773.50px;top:405.46px;font-size:16px;line-height:20px;color:#aeaeae;letter-spacing:-0.116px;">Нет изменений</span>
<div style="left:130px;top:433px;width:829px;height:34px;background:#9bfa9b;"></div>
<svg style="left:151px;top:442px" width="17" height="18" viewBox="0 0 17 18"><rect x="0.6" y="0.6" width="15.4" height="16.8" fill="#fff" stroke="#a3bccd" stroke-width="1.2"/><path d="M16 0.6V17.4H0.6" fill="none" stroke="#7d97ab" stroke-width="1.2"/><rect x="1.3" y="11" width="14" height="5.8" fill="#e6edf6"/><path d="M7 3.3H13.6M7 6H13.6" stroke="#cfd9e6" stroke-width="0.9"/><path d="M3.2 9.6H13.6M3.2 12H13.6M3.2 14.4H13.6" stroke="#b4c4dc" stroke-width="0.9"/></svg>
<div class="cb" style="left:200px;top:442.3px;width:18.6px;height:18.6px"></div>
<svg style="left:200.4px;top:441px" width="20" height="20" viewBox="0 0 20 20"><path d="M2.6 10.8L5.2 9.2Q7.8 11.6 9.4 14.2Q12.4 6.6 18.6 0.2L19.6 0.8Q14.4 8.4 10.6 17.6L8.6 17.8Q6.2 13.6 2.6 10.8Z" fill="#009a49"/></svg>
<span class="t" style="left:311.30px;top:442.46px;font-size:16px;line-height:20px;color:#383838;letter-spacing:-0.132px;">Заказ-наряд</span>
<svg style="left:288.5px;top:445px" width="12" height="12" viewBox="0 0 12 12"><circle cx="6" cy="6" r="4.9" fill="#fff" stroke="#b5b5b5" stroke-width="1"/><path d="M3.4 6H8.6" stroke="#9a9a9a" stroke-width="1.3"/></svg>
<span class="t" style="left:565.50px;top:442.46px;font-size:16px;line-height:20px;color:#ff4a0f;letter-spacing:-0.302px;">Запретить</span>
<span class="t" style="left:773.50px;top:442.46px;font-size:16px;line-height:20px;color:#aeaeae;letter-spacing:-0.116px;">Нет изменений</span>
<div style="left:130px;top:469px;width:829px;height:34px;background:#9bfa9b;"></div>
<svg style="left:151px;top:478px" width="17" height="18" viewBox="0 0 17 18"><rect x="0.6" y="0.6" width="15.4" height="16.8" fill="#fff" stroke="#a3bccd" stroke-width="1.2"/><path d="M16 0.6V17.4H0.6" fill="none" stroke="#7d97ab" stroke-width="1.2"/><rect x="1.3" y="12.6" width="14" height="4.2" fill="#dde7f4"/><ellipse cx="8.8" cy="12.3" rx="4.7" ry="2.1" fill="#dd9c1c"/><ellipse cx="8.8" cy="11.5" rx="4.7" ry="2" fill="#ffdf66"/><ellipse cx="7.9" cy="9.6" rx="4.7" ry="2.1" fill="#dd9c1c"/><ellipse cx="7.9" cy="8.8" rx="4.7" ry="2" fill="#ffe272"/><ellipse cx="9" cy="6.9" rx="4.7" ry="2.1" fill="#e3a624"/><ellipse cx="9" cy="6.1" rx="4.7" ry="2" fill="#ffec86"/></svg>
<div class="cb" style="left:200px;top:478.3px;width:18.6px;height:18.6px"></div>
<svg style="left:200.4px;top:477px" width="20" height="20" viewBox="0 0 20 20"><path d="M2.6 10.8L5.2 9.2Q7.8 11.6 9.4 14.2Q12.4 6.6 18.6 0.2L19.6 0.8Q14.4 8.4 10.6 17.6L8.6 17.8Q6.2 13.6 2.6 10.8Z" fill="#009a49"/></svg>
<span class="t" style="left:334.80px;top:478.46px;font-size:16px;line-height:20px;color:#383838;letter-spacing:-0.061px;">Продажи</span>
<span class="t" style="left:773.50px;top:478.46px;font-size:16px;line-height:20px;color:#aeaeae;letter-spacing:-0.116px;">Нет изменений</span>
<div style="left:130px;top:505px;width:829px;height:35px;background:#9bfa9b;"></div>
<div style="left:130px;top:541px;width:829px;height:1px;background:#ececec;"></div>
<svg style="left:151px;top:514px" width="17" height="18" viewBox="0 0 17 18"><rect x="0.6" y="0.6" width="15.4" height="16.8" fill="#fff" stroke="#a3bccd" stroke-width="1.2"/><path d="M16 0.6V17.4H0.6" fill="none" stroke="#7d97ab" stroke-width="1.2"/><rect x="1.3" y="12.6" width="14" height="4.2" fill="#dde7f4"/><ellipse cx="8.8" cy="12.3" rx="4.7" ry="2.1" fill="#dd9c1c"/><ellipse cx="8.8" cy="11.5" rx="4.7" ry="2" fill="#ffdf66"/><ellipse cx="7.9" cy="9.6" rx="4.7" ry="2.1" fill="#dd9c1c"/><ellipse cx="7.9" cy="8.8" rx="4.7" ry="2" fill="#ffe272"/><ellipse cx="9" cy="6.9" rx="4.7" ry="2.1" fill="#e3a624"/><ellipse cx="9" cy="6.1" rx="4.7" ry="2" fill="#ffec86"/></svg>
<div class="cb" style="left:200px;top:514.3px;width:18.6px;height:18.6px"></div>
<svg style="left:200.4px;top:513px" width="20" height="20" viewBox="0 0 20 20"><path d="M2.6 10.8L5.2 9.2Q7.8 11.6 9.4 14.2Q12.4 6.6 18.6 0.2L19.6 0.8Q14.4 8.4 10.6 17.6L8.6 17.8Q6.2 13.6 2.6 10.8Z" fill="#009a49"/></svg>
<span class="t" style="left:334.80px;top:514.46px;font-size:16px;line-height:20px;color:#383838;">Автомобили на ослужи...</span>
<span class="t" style="left:773.50px;top:514.46px;font-size:16px;line-height:20px;color:#aeaeae;letter-spacing:-0.116px;">Нет изменений</span>
<div style="left:130px;top:577px;width:829px;height:1px;background:#e9e9e9;"></div>
<svg style="left:151px;top:551px" width="17" height="18" viewBox="0 0 17 18"><rect x="0.6" y="0.6" width="15.4" height="16.8" fill="#fff" stroke="#a3bccd" stroke-width="1.2"/><path d="M16 0.6V17.4H0.6" fill="none" stroke="#7d97ab" stroke-width="1.2"/><rect x="1.3" y="12.6" width="14" height="4.2" fill="#dde7f4"/><ellipse cx="8.8" cy="12.3" rx="4.7" ry="2.1" fill="#dd9c1c"/><ellipse cx="8.8" cy="11.5" rx="4.7" ry="2" fill="#ffdf66"/><ellipse cx="7.9" cy="9.6" rx="4.7" ry="2.1" fill="#dd9c1c"/><ellipse cx="7.9" cy="8.8" rx="4.7" ry="2" fill="#ffe272"/><ellipse cx="9" cy="6.9" rx="4.7" ry="2.1" fill="#e3a624"/><ellipse cx="9" cy="6.1" rx="4.7" ry="2" fill="#ffec86"/></svg>
<div class="cb" style="left:200px;top:551.3px;width:18.6px;height:18.6px"></div>
<span class="t" style="left:334.80px;top:551.46px;font-size:16px;line-height:20px;color:#383838;letter-spacing:-0.018px;">Товары компании в пр...</span>
<span class="t" style="left:773.50px;top:551.46px;font-size:16px;line-height:20px;color:#aeaeae;letter-spacing:-0.116px;">Нет изменений</span>
<div style="left:130px;top:579.6px;width:47.2px;height:32.4px;background:#fff1a6;"></div>
<div style="left:178.8px;top:579.6px;width:61.2px;height:32.4px;background:#ffd91a;"></div>
<div style="left:241px;top:579.6px;width:302.6px;height:32.4px;background:#fff1a6;"></div>
<div style="left:544.8px;top:579.6px;width:190.6px;height:32.4px;background:#fff1a6;"></div>
<div style="left:736.6px;top:579.6px;width:185.8px;height:32.4px;background:#fff1a6;"></div>
<div style="left:923.6px;top:579.6px;width:35px;height:32.4px;background:#fff1a6;"></div>
<svg style="left:151px;top:587px" width="17" height="18" viewBox="0 0 17 18"><rect x="0.6" y="0.6" width="15.4" height="16.8" fill="#fff" stroke="#a3bccd" stroke-width="1.2"/><path d="M16 0.6V17.4H0.6" fill="none" stroke="#7d97ab" stroke-width="1.2"/><rect x="1.3" y="12.6" width="14" height="4.2" fill="#dde7f4"/><ellipse cx="8.8" cy="12.3" rx="4.7" ry="2.1" fill="#dd9c1c"/><ellipse cx="8.8" cy="11.5" rx="4.7" ry="2" fill="#ffdf66"/><ellipse cx="7.9" cy="9.6" rx="4.7" ry="2.1" fill="#dd9c1c"/><ellipse cx="7.9" cy="8.8" rx="4.7" ry="2" fill="#ffe272"/><ellipse cx="9" cy="6.9" rx="4.7" ry="2.1" fill="#e3a624"/><ellipse cx="9" cy="6.1" rx="4.7" ry="2" fill="#ffec86"/></svg>
<div class="cb" style="left:200px;top:587.3px;width:18.6px;height:18.6px"></div>
<span class="t" style="left:334.80px;top:587.46px;font-size:16px;line-height:20px;color:#383838;letter-spacing:0.012px;">Выработка сотрудников</span>
<span class="t" style="left:773.50px;top:587.46px;font-size:16px;line-height:20px;color:#aeaeae;letter-spacing:-0.116px;">Нет изменений</span>
<div style="left:130px;top:614px;width:829px;height:34px;background:#9bfa9b;"></div>
<svg style="left:151px;top:623px" width="17" height="18" viewBox="0 0 17 18"><rect x="0.6" y="0.6" width="15.4" height="16.8" fill="#fff" stroke="#a3bccd" stroke-width="1.2"/><path d="M16 0.6V17.4H0.6" fill="none" stroke="#7d97ab" stroke-width="1.2"/><rect x="1.3" y="12.6" width="14" height="4.2" fill="#dde7f4"/><ellipse cx="8.8" cy="12.3" rx="4.7" ry="2.1" fill="#dd9c1c"/><ellipse cx="8.8" cy="11.5" rx="4.7" ry="2" fill="#ffdf66"/><ellipse cx="7.9" cy="9.6" rx="4.7" ry="2.1" fill="#dd9c1c"/><ellipse cx="7.9" cy="8.8" rx="4.7" ry="2" fill="#ffe272"/><ellipse cx="9" cy="6.9" rx="4.7" ry="2.1" fill="#e3a624"/><ellipse cx="9" cy="6.1" rx="4.7" ry="2" fill="#ffec86"/></svg>
<div class="cb" style="left:200px;top:623.3px;width:18.6px;height:18.6px"></div>
<svg style="left:200.4px;top:622px" width="20" height="20" viewBox="0 0 20 20"><path d="M2.6 10.8L5.2 9.2Q7.8 11.6 9.4 14.2Q12.4 6.6 18.6 0.2L19.6 0.8Q14.4 8.4 10.6 17.6L8.6 17.8Q6.2 13.6 2.6 10.8Z" fill="#009a49"/></svg>
<span class="t" style="left:334.80px;top:623.46px;font-size:16px;line-height:20px;color:#383838;letter-spacing:-0.164px;">Остатки автомобилей</span>
<span class="t" style="left:773.50px;top:623.46px;font-size:16px;line-height:20px;color:#aeaeae;letter-spacing:-0.116px;">Нет изменений</span>
<div style="left:130px;top:650px;width:829px;height:34px;background:#9bfa9b;"></div>
<svg style="left:151px;top:659px" width="17" height="18" viewBox="0 0 17 18"><rect x="0.6" y="0.6" width="15.4" height="16.8" fill="#fff" stroke="#a3bccd" stroke-width="1.2"/><path d="M16 0.6V17.4H0.6" fill="none" stroke="#7d97ab" stroke-width="1.2"/><rect x="1.3" y="12.6" width="14" height="4.2" fill="#dde7f4"/><ellipse cx="8.8" cy="12.3" rx="4.7" ry="2.1" fill="#dd9c1c"/><ellipse cx="8.8" cy="11.5" rx="4.7" ry="2" fill="#ffdf66"/><ellipse cx="7.9" cy="9.6" rx="4.7" ry="2.1" fill="#dd9c1c"/><ellipse cx="7.9" cy="8.8" rx="4.7" ry="2" fill="#ffe272"/><ellipse cx="9" cy="6.9" rx="4.7" ry="2.1" fill="#e3a624"/><ellipse cx="9" cy="6.1" rx="4.7" ry="2" fill="#ffec86"/></svg>
<div class="cb" style="left:200px;top:659.3px;width:18.6px;height:18.6px"></div>
<svg style="left:200.4px;top:658px" width="20" height="20" viewBox="0 0 20 20"><path d="M2.6 10.8L5.2 9.2Q7.8 11.6 9.4 14.2Q12.4 6.6 18.6 0.2L19.6 0.8Q14.4 8.4 10.6 17.6L8.6 17.8Q6.2 13.6 2.6 10.8Z" fill="#009a49"/></svg>
<span class="t" style="left:334.80px;top:659.46px;font-size:16px;line-height:20px;color:#383838;letter-spacing:0.005px;">Взаиморасчеты компании</span>
<span class="t" style="left:773.50px;top:659.46px;font-size:16px;line-height:20px;color:#aeaeae;letter-spacing:-0.116px;">Нет изменений</span>
<div style="left:130px;top:686px;width:829px;height:35px;background:#9bfa9b;"></div>
<svg style="left:151px;top:695px" width="17" height="18" viewBox="0 0 17 18"><rect x="0.6" y="0.6" width="15.4" height="16.8" fill="#fff" stroke="#a3bccd" stroke-width="1.2"/><path d="M16 0.6V17.4H0.6" fill="none" stroke="#7d97ab" stroke-width="1.2"/><rect x="1.3" y="12.6" width="14" height="4.2" fill="#dde7f4"/><ellipse cx="8.8" cy="12.3" rx="4.7" ry="2.1" fill="#dd9c1c"/><ellipse cx="8.8" cy="11.5" rx="4.7" ry="2" fill="#ffdf66"/><ellipse cx="7.9" cy="9.6" rx="4.7" ry="2.1" fill="#dd9c1c"/><ellipse cx="7.9" cy="8.8" rx="4.7" ry="2" fill="#ffe272"/><ellipse cx="9" cy="6.9" rx="4.7" ry="2.1" fill="#e3a624"/><ellipse cx="9" cy="6.1" rx="4.7" ry="2" fill="#ffec86"/></svg>
<div class="cb" style="left:200px;top:695.3px;width:18.6px;height:18.6px"></div>
<svg style="left:200.4px;top:694px" width="20" height="20" viewBox="0 0 20 20"><path d="M2.6 10.8L5.2 9.2Q7.8 11.6 9.4 14.2Q12.4 6.6 18.6 0.2L19.6 0.8Q14.4 8.4 10.6 17.6L8.6 17.8Q6.2 13.6 2.6 10.8Z" fill="#009a49"/></svg>
<span class="t" style="left:334.80px;top:695.46px;font-size:16px;line-height:20px;color:#383838;letter-spacing:0.265px;">Доходы и расходы</span>
<span class="t" style="left:773.50px;top:695.46px;font-size:16px;line-height:20px;color:#aeaeae;letter-spacing:-0.116px;">Нет изменений</span>
<div style="left:130px;top:723px;width:829px;height:34px;background:#9bfa9b;"></div>
<svg style="left:151px;top:732px" width="17" height="18" viewBox="0 0 17 18"><rect x="0.6" y="0.6" width="15.4" height="16.8" fill="#fff" stroke="#a3bccd" stroke-width="1.2"/><path d="M16 0.6V17.4H0.6" fill="none" stroke="#7d97ab" stroke-width="1.2"/><rect x="1.3" y="12.6" width="14" height="4.2" fill="#dde7f4"/><ellipse cx="8.8" cy="12.3" rx="4.7" ry="2.1" fill="#dd9c1c"/><ellipse cx="8.8" cy="11.5" rx="4.7" ry="2" fill="#ffdf66"/><ellipse cx="7.9" cy="9.6" rx="4.7" ry="2.1" fill="#dd9c1c"/><ellipse cx="7.9" cy="8.8" rx="4.7" ry="2" fill="#ffe272"/><ellipse cx="9" cy="6.9" rx="4.7" ry="2.1" fill="#e3a624"/><ellipse cx="9" cy="6.1" rx="4.7" ry="2" fill="#ffec86"/></svg>
<div class="cb" style="left:200px;top:732.3px;width:18.6px;height:18.6px"></div>
<svg style="left:200.4px;top:731px" width="20" height="20" viewBox="0 0 20 20"><path d="M2.6 10.8L5.2 9.2Q7.8 11.6 9.4 14.2Q12.4 6.6 18.6 0.2L19.6 0.8Q14.4 8.4 10.6 17.6L8.6 17.8Q6.2 13.6 2.6 10.8Z" fill="#009a49"/></svg>
<span class="t" style="left:334.80px;top:732.46px;font-size:16px;line-height:20px;color:#383838;">Бонусные карты</span>
<span class="t" style="left:773.50px;top:732.46px;font-size:16px;line-height:20px;color:#aeaeae;letter-spacing:-0.116px;">Нет изменений</span>
<div style="left:130px;top:759px;width:829px;height:34px;background:#9bfa9b;"></div>
<svg style="left:151px;top:768px" width="17" height="18" viewBox="0 0 17 18"><rect x="0.6" y="0.6" width="15.4" height="16.8" fill="#fff" stroke="#a3bccd" stroke-width="1.2"/><path d="M16 0.6V17.4H0.6" fill="none" stroke="#7d97ab" stroke-width="1.2"/><rect x="1.3" y="12.6" width="14" height="4.2" fill="#dde7f4"/><ellipse cx="8.8" cy="12.3" rx="4.7" ry="2.1" fill="#dd9c1c"/><ellipse cx="8.8" cy="11.5" rx="4.7" ry="2" fill="#ffdf66"/><ellipse cx="7.9" cy="9.6" rx="4.7" ry="2.1" fill="#dd9c1c"/><ellipse cx="7.9" cy="8.8" rx="4.7" ry="2" fill="#ffe272"/><ellipse cx="9" cy="6.9" rx="4.7" ry="2.1" fill="#e3a624"/><ellipse cx="9" cy="6.1" rx="4.7" ry="2" fill="#ffec86"/></svg>
<div class="cb" style="left:200px;top:768.3px;width:18.6px;height:18.6px"></div>
<svg style="left:200.4px;top:767px" width="20" height="20" viewBox="0 0 20 20"><path d="M2.6 10.8L5.2 9.2Q7.8 11.6 9.4 14.2Q12.4 6.6 18.6 0.2L19.6 0.8Q14.4 8.4 10.6 17.6L8.6 17.8Q6.2 13.6 2.6 10.8Z" fill="#009a49"/></svg>
<span class="t" style="left:334.80px;top:768.46px;font-size:16px;line-height:20px;color:#383838;letter-spacing:-0.130px;">Реализованные товары</span>
<span class="t" style="left:773.50px;top:768.46px;font-size:16px;line-height:20px;color:#aeaeae;letter-spacing:-0.116px;">Нет изменений</span>
<div style="left:130px;top:795px;width:829px;height:35px;background:#9bfa9b;"></div>
<div style="left:130px;top:831px;width:829px;height:1px;background:#ececec;"></div>
<svg style="left:151px;top:804px" width="17" height="18" viewBox="0 0 17 18"><rect x="0.6" y="0.6" width="15.4" height="16.8" fill="#fff" stroke="#a3bccd" stroke-width="1.2"/><path d="M16 0.6V17.4H0.6" fill="none" stroke="#7d97ab" stroke-width="1.2"/><rect x="1.3" y="12.6" width="14" height="4.2" fill="#dde7f4"/><ellipse cx="8.8" cy="12.3" rx="4.7" ry="2.1" fill="#dd9c1c"/><ellipse cx="8.8" cy="11.5" rx="4.7" ry="2" fill="#ffdf66"/><ellipse cx="7.9" cy="9.6" rx="4.7" ry="2.1" fill="#dd9c1c"/><ellipse cx="7.9" cy="8.8" rx="4.7" ry="2" fill="#ffe272"/><ellipse cx="9" cy="6.9" rx="4.7" ry="2.1" fill="#e3a624"/><ellipse cx="9" cy="6.1" rx="4.7" ry="2" fill="#ffec86"/></svg>
<div class="cb" style="left:200px;top:804.3px;width:18.6px;height:18.6px"></div>
<svg style="left:200.4px;top:803px" width="20" height="20" viewBox="0 0 20 20"><path d="M2.6 10.8L5.2 9.2Q7.8 11.6 9.4 14.2Q12.4 6.6 18.6 0.2L19.6 0.8Q14.4 8.4 10.6 17.6L8.6 17.8Q6.2 13.6 2.6 10.8Z" fill="#009a49"/></svg>
<span class="t" style="left:334.80px;top:804.46px;font-size:16px;line-height:20px;color:#383838;letter-spacing:-0.098px;">Комплектация автомоб...</span>
<span class="t" style="left:773.50px;top:804.46px;font-size:16px;line-height:20px;color:#aeaeae;letter-spacing:-0.116px;">Нет изменений</span>
<div style="left:130px;top:867px;width:829px;height:1px;background:#e9e9e9;"></div>
<svg style="left:151px;top:841px" width="17" height="18" viewBox="0 0 17 18"><rect x="0.6" y="0.6" width="15.4" height="16.8" fill="#fff" stroke="#a3bccd" stroke-width="1.2"/><path d="M16 0.6V17.4H0.6" fill="none" stroke="#7d97ab" stroke-width="1.2"/><rect x="1.3" y="11" width="14" height="5.8" fill="#e6edf6"/><path d="M7 3.3H13.6M7 6H13.6" stroke="#cfd9e6" stroke-width="0.9"/><path d="M3.2 9.6H13.6M3.2 12H13.6M3.2 14.4H13.6" stroke="#b4c4dc" stroke-width="0.9"/></svg>
<div class="cb" style="left:200px;top:841.3px;width:18.6px;height:18.6px"></div>
<span class="t" style="left:311.30px;top:841.46px;font-size:16px;line-height:20px;color:#383838;letter-spacing:-0.006px;">Заказ покупателя</span>
<span class="t" style="left:565.50px;top:841.46px;font-size:16px;line-height:20px;color:#ff4a0f;letter-spacing:-0.302px;">Запретить</span>
<span class="t" style="left:773.50px;top:841.46px;font-size:16px;line-height:20px;color:#aeaeae;letter-spacing:-0.116px;">Нет изменений</span>
<div style="left:130px;top:903px;width:829px;height:1px;background:#e9e9e9;"></div>
<svg style="left:151px;top:877px" width="17" height="18" viewBox="0 0 17 18"><rect x="0.6" y="0.6" width="15.4" height="16.8" fill="#fff" stroke="#a3bccd" stroke-width="1.2"/><path d="M16 0.6V17.4H0.6" fill="none" stroke="#7d97ab" stroke-width="1.2"/><rect x="1.3" y="11" width="14" height="5.8" fill="#e6edf6"/><path d="M7 3.3H13.6M7 6H13.6" stroke="#cfd9e6" stroke-width="0.9"/><path d="M3.2 9.6H13.6M3.2 12H13.6M3.2 14.4H13.6" stroke="#b4c4dc" stroke-width="0.9"/></svg>
<div class="cb" style="left:200px;top:877.3px;width:18.6px;height:18.6px"></div>
<span class="t" style="left:311.30px;top:877.46px;font-size:16px;line-height:20px;color:#383838;letter-spacing:0.112px;">Заказ поставщику</span>
<span class="t" style="left:565.50px;top:877.46px;font-size:16px;line-height:20px;color:#ff4a0f;letter-spacing:-0.302px;">Запретить</span>
<span class="t" style="left:773.50px;top:877.46px;font-size:16px;line-height:20px;color:#aeaeae;letter-spacing:-0.116px;">Нет изменений</span>
<svg style="left:151px;top:913px" width="17" height="18" viewBox="0 0 17 18"><rect x="0.6" y="0.6" width="15.4" height="16.8" fill="#fff" stroke="#a3bccd" stroke-width="1.2"/><path d="M16 0.6V17.4H0.6" fill="none" stroke="#7d97ab" stroke-width="1.2"/><rect x="1.3" y="11" width="14" height="5.8" fill="#e6edf6"/><path d="M7 3.3H13.6M7 6H13.6" stroke="#cfd9e6" stroke-width="0.9"/><path d="M3.2 9.6H13.6M3.2 12H13.6M3.2 14.4H13.6" stroke="#b4c4dc" stroke-width="0.9"/></svg>
<div class="cb" style="left:200px;top:913.3px;width:18.6px;height:18.6px"></div>
<span class="t" style="left:311.30px;top:913.46px;font-size:16px;line-height:20px;color:#383838;letter-spacing:-0.046px;">Закрытие накопительных ...</span>
<span class="t" style="left:565.50px;top:913.46px;font-size:16px;line-height:20px;color:#ff4a0f;letter-spacing:-0.302px;">Запретить</span>
<span class="t" style="left:773.50px;top:913.46px;font-size:16px;line-height:20px;color:#aeaeae;letter-spacing:-0.116px;">Нет изменений</span>
<div style="left:240px;top:324px;width:1px;height:614px;background:#c6c6c6;"></div>
<svg style="left:962px;top:296px" width="10" height="7" viewBox="0 0 10 7"><path d="M5 0.6L9.4 6.4H0.6Z" fill="#3c3c3c"/></svg>
<div style="left:962.5px;top:315px;width:9.5px;height:591px;background:#d7d7d7;border-radius:5px;"></div>
<div style="left:963px;top:451.5px;width:8.6px;height:62px;background:#9c9a9d;border-radius:4.5px;"></div>
<svg style="left:962px;top:917px" width="10" height="7" viewBox="0 0 10 7"><path d="M5 6.4L9.4 0.6H0.6Z" fill="#3c3c3c"/></svg>
<svg style="left:140px;top:938.5px" width="7" height="10" viewBox="0 0 7 10"><path d="M0.6 5L6.4 0.6V9.4Z" fill="#c9c9c9"/></svg>
<div style="left:159.4px;top:938.6px;width:770px;height:9.6px;background:#d7d7d7;border-radius:5px;"></div>
<div style="left:159.4px;top:938.6px;width:630.6px;height:9.6px;background:#9c9a9d;border-radius:5px;"></div>
<svg style="left:941px;top:938.5px" width="7" height="10" viewBox="0 0 7 10"><path d="M6.4 5L0.6 0.6V9.4Z" fill="#3c3c3c"/></svg>
<div style="left:996px;top:194.1px;width:1.2px;height:773px;background:repeating-linear-gradient(#cfcdcf 0 3.9px,#fff 3.9px 7.7px);"></div>
<div style="left:1002.5px;top:230px;width:795.5px;height:737px;border:1px solid #bab8ba;background:#fff;"></div>
<div class="tab" style="left:1104.6px;top:194.4px;width:74.8px;height:35.6px"></div>
<div class="tab" style="left:1178.4px;top:194.4px;width:353.4px;height:35.6px"></div>
<div class="tab" style="left:1530.8px;top:194.4px;width:252px;height:35.6px"></div>
<div class="tab on" style="left:1002.5px;top:194.4px;width:103.1px;height:36.6px"></div>
<span class="t" style="left:1017.20px;top:203.46px;font-size:16px;line-height:20px;color:#484848;letter-spacing:-0.014px;">Основное</span>
<span class="t" style="left:1119.90px;top:203.46px;font-size:16px;line-height:20px;color:#484848;letter-spacing:-0.527px;">Отбор</span>
<span class="t" style="left:1193.80px;top:203.46px;font-size:16px;line-height:20px;color:#484848;letter-spacing:-0.016px;">Объекты, которые будут зарегистрированы</span>
<span class="t" style="left:1546.00px;top:203.46px;font-size:16px;line-height:20px;color:#484848;letter-spacing:-0.087px;">Зарегистрированные объекты</span>
<span class="t" style="left:1015.50px;top:246.16px;font-size:16px;line-height:20px;color:#484848;letter-spacing:-0.094px;">Уровни регистрации объектов (ссылок):</span>
<div style="left:1014.5px;top:275px;width:375px;height:31.5px;border:1px solid #acaaac;border-radius:3.5px;background:linear-gradient(#fff,#fbfafb 45%,#ebe9eb);box-shadow:0 0 0 .5px rgba(0,0,0,.14),0 1px 1px rgba(0,0,0,.12);"></div>
<div style="left:1139px;top:276px;width:125px;height:29.5px;background:#fff;border-left:1px solid #b8b8b8;border-right:1px solid #b8b8b8;"></div>
<span class="t" style="left:1071.50px;top:282.46px;font-size:16px;line-height:20px;color:#484848;">1</span>
<span class="t" style="left:1196.30px;top:282.46px;font-size:16px;line-height:20px;color:#3fb072;">2</span>
<span class="t" style="left:1321.00px;top:282.46px;font-size:16px;line-height:20px;color:#484848;">3</span>
<span class="t" style="left:1015.80px;top:315.46px;font-size:16px;line-height:20px;color:#8c8160;letter-spacing:0.055px;">&quot;1&quot; - будет зарегистрирована для обмена только ссылка на объект</span>
<span class="t" style="left:1015.80px;top:335.46px;font-size:16px;line-height:20px;color:#8c8160;letter-spacing:0.038px;">&quot;2&quot; - будет зарегистрирована ссылка на объект и ссылки, которые в реквизитах/реквизитах табличных</span>
<span class="t" style="left:1015.80px;top:355.46px;font-size:16px;line-height:20px;color:#8c8160;letter-spacing:-0.061px;">частей данного объекта.</span>
<span class="t" style="left:1015.80px;top:375.46px;font-size:16px;line-height:20px;color:#8c8160;letter-spacing:0.112px;">&quot;3&quot; - будут зарегистрированы почти все связанные ссылки в реквизитах для поддержания</span>
<span class="t" style="left:1015.80px;top:395.46px;font-size:16px;line-height:20px;color:#8c8160;letter-spacing:-0.047px;">целостности данных (время регистрации  возрастет)</span>
<div style="left:1014.5px;top:431px;width:100px;height:31px;border:1px solid #b0b0b0;border-radius:3px;background:#fff;"></div>
<div style="left:1015.5px;top:432px;width:72px;height:29px;background:#fffbdc;border-radius:2px 0 0 2px;"></div>
<div style="left:1087.5px;top:432px;width:1px;height:29px;background:#c4c4c4;"></div>
<div style="left:1088.5px;top:446px;width:25px;height:1px;background:#c4c4c4;"></div>
<span class="t" style="left:1075.20px;top:437.46px;font-size:16px;line-height:20px;color:#333;">0</span>
<svg style="left:1099.2px;top:438.4px" width="5" height="3" viewBox="0 0 7 4"><path d="M3.5 0.2L6.6 3.8H0.4Z" fill="#444"/></svg>
<svg style="left:1099.2px;top:452px" width="5" height="3" viewBox="0 0 7 4"><path d="M3.5 3.8L6.6 0.2H0.4Z" fill="#444"/></svg>
<span class="t" style="left:1122.00px;top:437.46px;font-size:16px;line-height:20px;color:#484848;letter-spacing:-0.013px;">Зарегистрировать первые ссылки/наборы записей</span>
<span class="t" style="left:1015.80px;top:470.46px;font-size:16px;line-height:20px;color:#8c8160;letter-spacing:0.033px;">Если 0 - зарегистрированы будут все выбранные объекты</span>
<span class="t" style="left:1015.80px;top:509.96px;font-size:16px;line-height:20px;color:#484848;letter-spacing:0.073px;">Режим отбора данных регистров сведений периодических:</span>
<div style="left:1014.5px;top:539px;width:771.5px;height:31px;border:1px solid #b0b0b0;border-radius:3px;background:#fff;"></div>
<div style="left:1015.5px;top:540px;width:743px;height:29px;background:#fffbdc;border-radius:2px 0 0 2px;"></div>
<div style="left:1758.5px;top:540px;width:1px;height:29px;background:#c4c4c4;"></div>
<span class="t" style="left:1020.60px;top:545.06px;font-size:16px;line-height:20px;color:#333;letter-spacing:-0.066px;">За период</span>
<svg style="left:1768.9px;top:552.2px" width="7.2" height="4.5" viewBox="0 0 8 5"><path d="M0.2 0.2H7.8L4 4.8Z" fill="#4a4a4a"/></svg>
<div class="cb" style="left:1016px;top:586.2px;width:18.8px;height:18.4px"></div>
<svg style="left:1016.4px;top:584.9px" width="20" height="20" viewBox="0 0 20 20"><path d="M2.6 10.8L5.2 9.2Q7.8 11.6 9.4 14.2Q12.4 6.6 18.6 0.2L19.6 0.8Q14.4 8.4 10.6 17.6L8.6 17.8Q6.2 13.6 2.6 10.8Z" fill="#009a49"/></svg>
<span class="t" style="left:1059.00px;top:585.86px;font-size:16px;line-height:20px;color:#484848;letter-spacing:0.035px;">Регистрировать для обмена движения документов</span>
<span class="t" style="left:1015.80px;top:617.46px;font-size:16px;line-height:20px;color:#8c8160;letter-spacing:0.083px;">Если флаг установлен, то система для каждого вида документов предложит выбрать из списка</span>
<span class="t" style="left:1015.80px;top:637.46px;font-size:16px;line-height:20px;color:#8c8160;letter-spacing:0.055px;">регистры, которые учавхствуют в движениях, для выборочной регистрации.</span>
</div>
</body></html>
